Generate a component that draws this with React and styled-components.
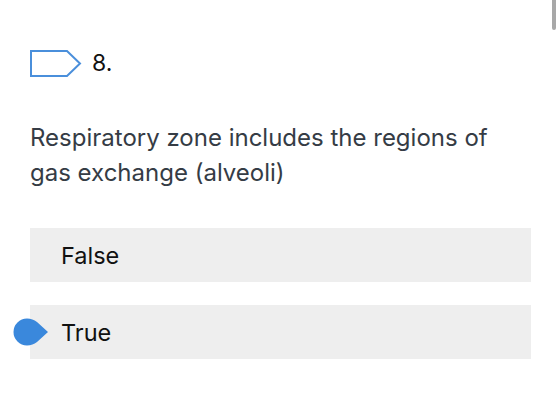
import React from "react";
import styled, { createGlobalStyle } from "styled-components";

const Global = createGlobalStyle`
  html, body { margin: 0; padding: 0; background: #fff; }
  body { font-family: Inter, "Liberation Sans", sans-serif; overflow: hidden; }
`;

const Page = styled.div`
  position: relative;
  width: 560px;
  height: 402px;
  padding: 49px 29px 0 30px;
  box-sizing: border-box;
`;

const Header = styled.div`
  display: flex;
  align-items: center;
  gap: 10px;
`;

const Number = styled.span`
  font-size: 23px;
  color: #111;
`;

const Question = styled.p`
  margin: 43px 0 0;
  font-size: 24px;
  line-height: 35px;
  color: #353c45;
`;

const Options = styled.div`
  display: flex;
  flex-direction: column;
  gap: 23px;
  margin-top: 38px;
`;

const Option = styled.div`
  position: relative;
  height: 54px;
  background: #eeeeee;
  display: flex;
  align-items: center;
  padding-left: 31px;
  font-size: 23.5px;
  color: #111;
`;

const Marker = styled.svg`
  position: absolute;
  left: -17px;
  top: 50%;
  transform: translateY(-50%);
`;

const ScrollThumb = styled.div`
  position: absolute;
  right: 4px;
  top: 0;
  width: 4px;
  height: 30px;
  background: #a8a8a8;
  border-radius: 0 0 2px 2px;
`;

function Tag() {
  return (
    <svg width="52" height="27" viewBox="0 0 52 27">
      <path d="M1 1 H37 L50 13.5 L37 26 H1 Z" fill="none" stroke="#4a8fdb" strokeWidth="2" />
    </svg>
  );
}

function Pin() {
  return (
    <Marker width="36" height="28" viewBox="0 0 36 28">
      <path d="M14 0.5 C18 0.5 21 2 24 4 L35 14 L24 24 C21 26 18 27.5 14 27.5 A13.5 13.5 0 0 1 14 0.5 Z" fill="#3a88dc" />
    </Marker>
  );
}

export default function App() {
  return (
    <>
      <Global />
      <Page>
        <Header>
          <Tag />
          <Number>8.</Number>
        </Header>
        <Question>Respiratory zone includes the regions of gas exchange (alveoli)</Question>
        <Options>
          <Option>False</Option>
          <Option>
            <Pin />
            True
          </Option>
        </Options>
        <ScrollThumb />
      </Page>
    </>
  );
}
